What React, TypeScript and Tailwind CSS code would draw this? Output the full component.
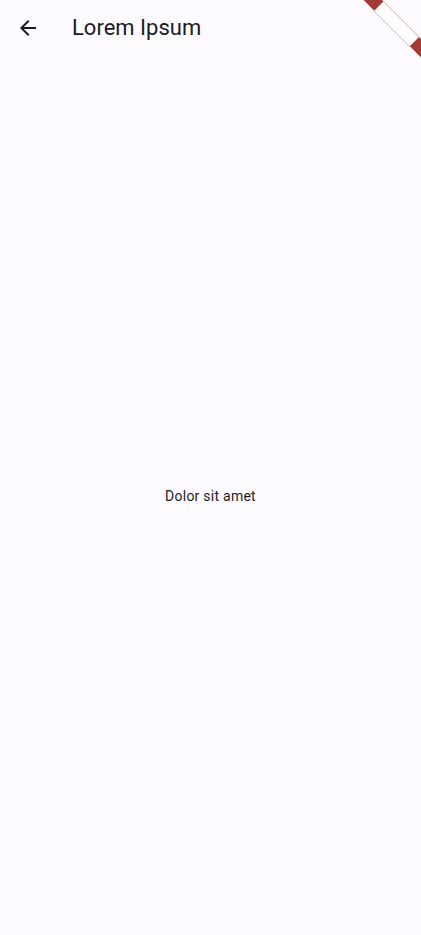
import React from "react";

const BackArrow = () => (
  <svg width="24" height="24" viewBox="0 0 24 24" fill="#1b1b1f">
    <path d="M20 11H7.83l5.59-5.59L12 4l-8 8 8 8 1.41-1.41L7.83 13H20v-2z" />
  </svg>
);

// debug ribbon in the corner: red ends, white middle with faint edges
const DebugBanner = () => (
  <svg
    width="60"
    height="60"
    viewBox="0 0 60 60"
    className="absolute top-0 right-0 pointer-events-none"
  >
    <polygon points="2.5,0 21,0 60,39 60,57.5" fill="#a33a3a" />
    <polygon points="13,11 22.5,1.5 58,37 48.5,46.5" fill="#ffffff" />
    <line x1="13" y1="11" x2="48.5" y2="46.5" stroke="#d9a0a0" strokeWidth="0.8" />
    <line x1="22.5" y1="1.5" x2="58" y2="37" stroke="#d9a0a0" strokeWidth="0.8" />
  </svg>
);

const App = () => {
  return (
    <div
      className="relative w-[421px] h-[935px] bg-[#fdfbff] flex flex-col overflow-hidden"
      style={{ fontFamily: "Roboto, sans-serif" }}
    >
      <header className="h-14 flex flex-row items-center px-4 flex-none">
        <button className="w-6 h-6 flex items-center justify-center">
          <BackArrow />
        </button>
        <h1 className="ml-8 text-[22px] leading-7 text-[#1b1b1f]">Lorem Ipsum</h1>
      </header>
      <main className="flex-1 flex items-center justify-center">
        <span className="text-sm tracking-[0.25px] text-[#1b1b1f]">Dolor sit amet</span>
      </main>
      <DebugBanner />
    </div>
  );
};

export default App;
